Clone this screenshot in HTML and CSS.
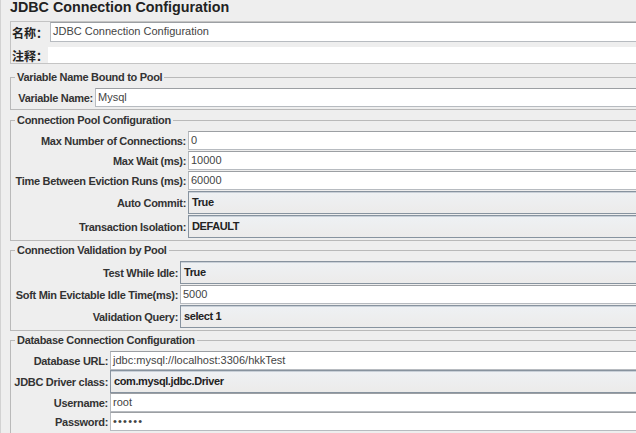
FILE: index.html
```html
<!DOCTYPE html>
<html lang="zh">
<head>
    <meta charset="UTF-8">
    <meta name="viewport" content="width=device-width, initial-scale=1.0">
    <title>JDBC Connection Configuration</title>
    <link rel="stylesheet" href="styles.css">
</head>
<body>
    <div class="page">
        <h1 class="title">JDBC Connection Configuration</h1>

        <!-- name / comments -->
        <div class="name-box">
            <div class="name-row">
                <span class="cjk-label name-label">名称：</span>
                <div class="field">JDBC Connection Configuration</div>
            </div>
            <div class="name-row comment-row">
                <span class="cjk-label comment-label">注释：</span>
                <div class="comment"></div>
            </div>
        </div>

        <fieldset class="group group-first">
            <legend>Variable Name Bound to Pool</legend>
            <div class="form-grid grid-var">
                <span class="label">Variable Name:</span>
                <div class="field">Mysql</div>
            </div>
        </fieldset>

        <fieldset class="group">
            <legend>Connection Pool Configuration</legend>
            <div class="form-grid grid-pool">
                <span class="label">Max Number of Connections:</span>
                <div class="field">0</div>
                <span class="label">Max Wait (ms):</span>
                <div class="field">10000</div>
                <span class="label">Time Between Eviction Runs (ms):</span>
                <div class="field">60000</div>
                <span class="label">Auto Commit:</span>
                <div class="combo">True</div>
                <span class="label">Transaction Isolation:</span>
                <div class="combo">DEFAULT</div>
            </div>
        </fieldset>

        <fieldset class="group group-tight">
            <legend>Connection Validation by Pool</legend>
            <div class="form-grid grid-valid">
                <span class="label">Test While Idle:</span>
                <div class="combo">True</div>
                <span class="label">Soft Min Evictable Idle Time(ms):</span>
                <div class="field">5000</div>
                <span class="label">Validation Query:</span>
                <div class="combo">select 1</div>
            </div>
        </fieldset>

        <fieldset class="group group-tight">
            <legend>Database Connection Configuration</legend>
            <div class="form-grid grid-db">
                <span class="label">Database URL:</span>
                <div class="field">jdbc:mysql://localhost:3306/hkkTest</div>
                <span class="label">JDBC Driver class:</span>
                <div class="combo">com.mysql.jdbc.Driver</div>
                <span class="label">Username:</span>
                <div class="field">root</div>
                <span class="label">Password:</span>
                <div class="field password">••••••</div>
            </div>
        </fieldset>
    </div>
</body>
</html>
```

FILE: styles.css
```css
html, body {
    margin: 0;
    background-color: #eeeeee;
    overflow: hidden;
}
.page {
    width: 626px;
    padding-left: 9px;
    border-left: 1px solid #d2d2d2;
    font-family: "Liberation Sans", Arial, sans-serif;
    font-size: 11px;
    color: #333;
}
.title {
    margin: 0;
    padding-bottom: 6px;
    font-size: 14.3px;
    line-height: 15px;
    font-weight: bold;
    color: #222;
}

/* name / comments box */
.name-box {
    border: 1px solid #c4c4c4;
    border-right: none;
    padding-left: 1px;
}
.name-row {
    display: flex;
    align-items: center;
    height: 20px;
}
.comment-row {
    height: 16px;
    margin-top: 5px;
}
.cjk-label {
    font-family: "Noto Sans CJK SC", sans-serif;
    font-size: 12px;
    font-weight: bold;
    color: #222;
    white-space: nowrap;
}
.name-label {
    flex: 0 0 38px;
}
.comment-label {
    flex: 0 0 33px;
}
.name-row .field {
    flex: 1;
    height: 20px;
}
.comment {
    flex: 1;
    height: 16px;
    background-color: #fff;
}

/* titled groups */
.group {
    margin: 3px 0 0 0;
    padding: 4px 0 2px 4px;
    border: 1px solid #b9b9b9;
    border-right: none;
    min-width: 0;
}
.group-first {
    margin-top: 6px;
}
.group-tight {
    margin-top: 2px;
}
.group legend {
    padding: 0 2px;
    font-weight: bold;
    line-height: 14px;
    letter-spacing: -0.3px;
    color: #333;
}
.form-grid {
    display: grid;
    column-gap: 2px;
    row-gap: 1px;
    align-items: center;
}
.grid-var { grid-template-columns: 78px 1fr; }
.grid-pool { grid-template-columns: 171px 1fr; }
.grid-valid { grid-template-columns: 163px 1fr; }
.grid-db {
    grid-template-columns: 93px 1fr;
    row-gap: 0;
}

.label {
    justify-self: end;
    white-space: nowrap;
    font-weight: bold;
    letter-spacing: -0.3px;
    color: #333;
}
.field {
    box-sizing: border-box;
    height: 19px;
    line-height: 17px;
    padding-left: 2px;
    background-color: #fff;
    border: 1px solid #b7bbc0;
    border-top-color: #9c9fa3;
    border-right: none;
    color: #444;
    white-space: nowrap;
}
.password {
    letter-spacing: 1.2px;
}
.combo {
    box-sizing: border-box;
    height: 23px;
    line-height: 21px;
    padding-left: 3px;
    background: linear-gradient(#eef1f4, #ecebea);
    border: 1px solid #87939f;
    border-right: none;
    box-shadow: inset 0 1px 0 #c9d0d8;
    font-weight: bold;
    letter-spacing: -0.4px;
    color: #222;
    white-space: nowrap;
}
```
